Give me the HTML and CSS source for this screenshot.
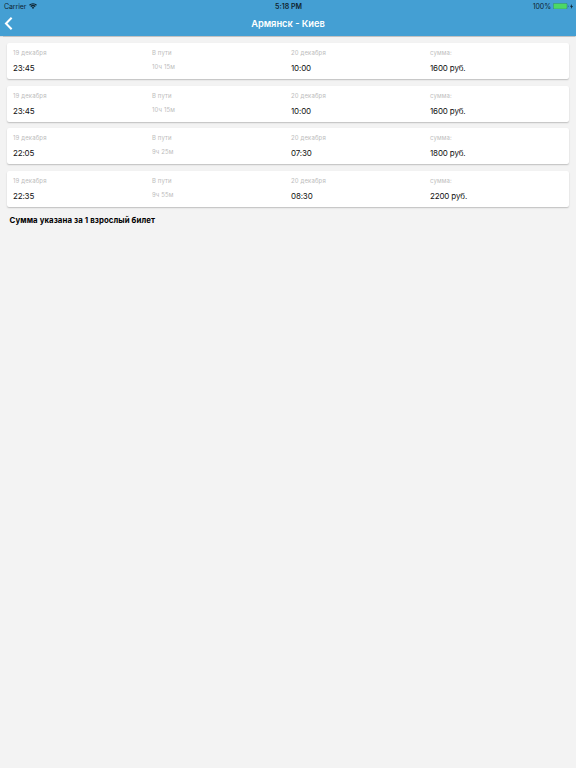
FILE: index.html
```html
<!DOCTYPE html>
<html lang="ru">
<head>
  <meta charset="UTF-8">
  <meta name="viewport" content="width=device-width, initial-scale=1.0">
  <title>Армянск - Киев</title>
  <link rel="stylesheet" href="styles.css">
</head>
<body>
  <header class="header">
    <div class="status-bar">
      <div class="status-left">
        <span class="carrier">Carrier</span>
        <svg class="wifi" viewBox="0 0 16 12">
          <path d="M1 4.6a10 10 0 0 1 14 0M3.6 7.2a6.3 6.3 0 0 1 8.8 0" fill="none" stroke="#10242f" stroke-width="2.6"/>
          <path d="M5.4 9.2a3.5 3.5 0 0 1 5.2 0L8 11.9z" fill="#10242f"/>
        </svg>
      </div>
      <span class="clock">5:18 PM</span>
      <div class="status-right">
        <span class="percent">100%</span>
        <svg class="battery" viewBox="0 0 30 12">
          <rect x=".5" y=".5" width="26" height="11" rx="2" fill="#4cd964" stroke="#2f7182"/>
          <path d="M28 4v4q1.5-.5 1.5-2T28 4z" fill="#2f6685"/>
        </svg>
        <svg class="bolt" viewBox="0 0 6 10">
          <path d="M3.8 0L0 5.7h2.5L1.8 10 6 4.2H3.4z" fill="#10242f"/>
        </svg>
      </div>
    </div>
    <nav class="nav-bar">
      <svg class="back" viewBox="0 0 8 12">
        <path d="M6.9 .7L1.7 6l5.2 5.3" fill="none" stroke="#fff" stroke-width="1.9"/>
      </svg>
      <h1 class="title">Армянск - Киев</h1>
    </nav>
  </header>

  <main class="trips">
    <div class="card">
      <div class="col"><span class="label">19 декабря</span><span class="value">23:45</span></div>
      <div class="col"><span class="label">В пути</span><span class="duration">10ч 15м</span></div>
      <div class="col"><span class="label">20 декабря</span><span class="value">10:00</span></div>
      <div class="col"><span class="label">сумма:</span><span class="value">1600 руб.</span></div>
    </div>
    <div class="card">
      <div class="col"><span class="label">19 декабря</span><span class="value">23:45</span></div>
      <div class="col"><span class="label">В пути</span><span class="duration">10ч 15м</span></div>
      <div class="col"><span class="label">20 декабря</span><span class="value">10:00</span></div>
      <div class="col"><span class="label">сумма:</span><span class="value">1600 руб.</span></div>
    </div>
    <div class="card">
      <div class="col"><span class="label">19 декабря</span><span class="value">22:05</span></div>
      <div class="col"><span class="label">В пути</span><span class="duration">9ч 25м</span></div>
      <div class="col"><span class="label">20 декабря</span><span class="value">07:30</span></div>
      <div class="col"><span class="label">сумма:</span><span class="value">1800 руб.</span></div>
    </div>
    <div class="card">
      <div class="col"><span class="label">19 декабря</span><span class="value">22:35</span></div>
      <div class="col"><span class="label">В пути</span><span class="duration">9ч 55м</span></div>
      <div class="col"><span class="label">20 декабря</span><span class="value">08:30</span></div>
      <div class="col"><span class="label">сумма:</span><span class="value">2200 руб.</span></div>
    </div>
    <p class="note">Сумма указана за 1 взрослый билет</p>
  </main>
</body>
</html>
```
FILE: styles.css
```css
* {
  box-sizing: border-box;
  margin: 0;
  padding: 0;
}

body {
  background: #f3f3f3;
  color: #111;
  font-family: Inter, "Liberation Sans", sans-serif;
  min-height: 768px;
}

.header {
  height: 36px;
  background: #449fd3;
  box-shadow: 0 0.5px 1px rgba(0, 0, 0, 0.2);
}

/* Status bar */
.status-bar {
  display: grid;
  grid-template-columns: 1fr auto 1fr;
  align-items: center;
  height: 13px;
  padding: 0 3px 0 4px;
  color: #10242f;
  font-size: 7px;
  line-height: 12px;
}

.status-left,
.status-right {
  display: flex;
  align-items: center;
}

.status-right {
  justify-content: flex-end;
}

.carrier {
  letter-spacing: -0.1px;
}

.wifi {
  width: 8px;
  height: 6px;
  margin-bottom: 1px;
  margin-left: 3px;
}

.clock {
  font-weight: 600;
}

.percent {
  letter-spacing: -0.05px;
}

.battery {
  width: 16px;
  height: 6.4px;
  margin-bottom: 1px;
  margin-left: 2px;
}

.bolt {
  width: 3px;
  height: 5px;
  margin-bottom: 1px;
  margin-left: 1px;
}

/* Navigation */
.nav-bar {
  display: grid;
  grid-template-columns: 1fr auto 1fr;
  align-items: center;
  height: 21px;
  padding-left: 4px;
  padding-right: 4px;
}

.back {
  width: 9px;
  height: 13px;
}

.title {
  color: #fff;
  font-size: 9.3px;
  font-weight: 600;
  line-height: 12px;
}

/* Trip list */
.trips {
  display: flex;
  flex-direction: column;
  gap: 6.7px;
  padding: 7px 7px 0;
}

.card {
  display: flex;
  height: 36px;
  padding: 5px 0 0 6px;
  background: #fff;
  border-radius: 2px;
  box-shadow: 0 1px 1.5px rgba(0, 0, 0, 0.22);
}

.col {
  display: flex;
  flex-direction: column;
  width: 139px;
}

.label,
.duration {
  color: #bcbcbc;
  font-size: 6px;
  letter-spacing: 0.13px;
  line-height: 10px;
}

.duration {
  margin-top: 4px;
}

.value {
  margin-top: 5px;
  font-size: 8px;
  letter-spacing: -0.15px;
  line-height: 10px;
}

.note {
  margin-top: 0.3px;
  padding-left: 2.5px;
  color: #000;
  font-size: 7.8px;
  font-weight: 700;
  letter-spacing: 0.1px;
  line-height: 12px;
}
```
